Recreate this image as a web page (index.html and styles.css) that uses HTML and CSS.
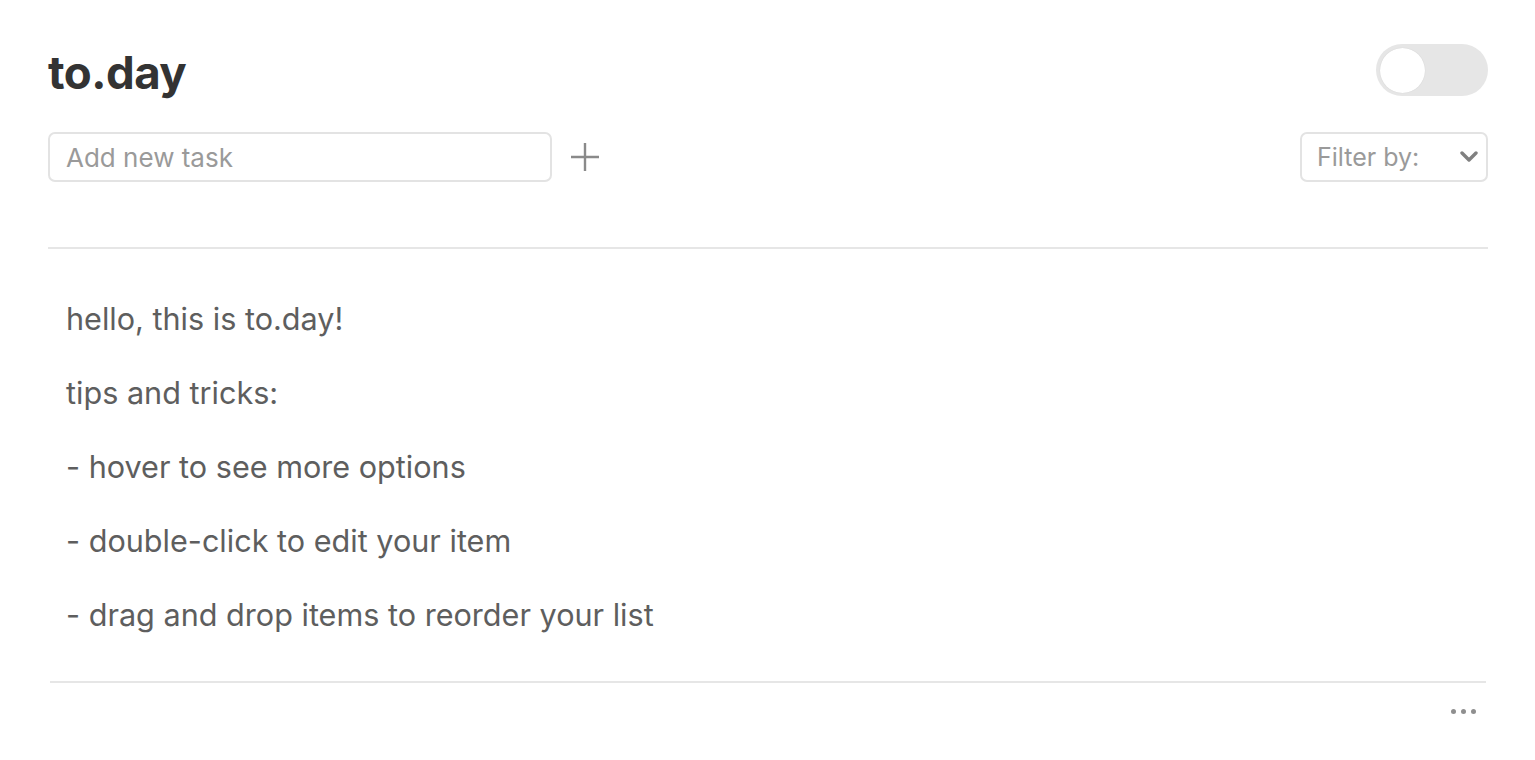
FILE: index.html
```html
<!DOCTYPE html>
<html lang="en">
<head>
<meta charset="utf-8">
<title>to.day</title>
<link rel="stylesheet" href="styles.css">
</head>
<body>
<div class="app">
  <header class="top">
    <h1 class="title">to.day</h1>
    <div class="toggle"><span class="knob"></span></div>
  </header>
  <div class="controls">
    <div class="add">
      <div class="task-input"><span class="placeholder">Add new task</span></div>
      <button class="plus" aria-label="Add">
        <svg width="30" height="30" viewBox="0 0 30 30"><path d="M15 1v28M1 15h28" stroke="#8a8a8a" stroke-width="2.4" fill="none"/></svg>
      </button>
    </div>
    <div class="filter">
      <span class="filter-label">Filter by:</span>
      <svg class="chev" width="18" height="12" viewBox="0 0 18 12"><path d="M2 2l7 7 7-7" stroke="#808080" stroke-width="3.4" fill="none" stroke-linecap="round" stroke-linejoin="round"/></svg>
    </div>
  </div>
  <div class="rule"></div>
  <ul class="list">
    <li>hello, this is to.day!</li>
    <li>tips and tricks:</li>
    <li>- hover to see more options</li>
    <li>- double-click to edit your item</li>
    <li>- drag and drop items to reorder your list</li>
  </ul>
  <div class="rule rule-bottom"></div>
  <footer class="foot">
    <span class="dots"><i></i><i></i><i></i></span>
  </footer>
</div>
</body>
</html>
```
FILE: styles.css
```css
* { box-sizing: border-box; }
html, body { margin: 0; background: #fff; }
body { font-family: Inter, "Liberation Sans", Arial, sans-serif; color: #5a5a5a; }
.app { padding: 44px 47px 0 48px; }
.top { display: flex; justify-content: space-between; align-items: center; height: 52px; }
.title { margin: 0; padding-top: 5px; font-size: 45.6px; font-weight: 700; color: #333; letter-spacing: -0.5px; line-height: 52px; }
.toggle { width: 112px; height: 52px; border-radius: 26px; background: #e6e6e6; padding: 3px 4px; display: flex; align-items: center; }
.knob { width: 45px; height: 45px; border-radius: 50%; background: #fff; box-shadow: 0 0 1px rgba(0,0,0,0.15); }
.controls { display: flex; justify-content: space-between; align-items: center; margin-top: 36px; height: 50px; }
.add { display: flex; align-items: center; gap: 18px; }
.task-input { width: 504px; height: 50px; border: 2px solid #e3e3e3; border-radius: 7px; padding: 0 16px; display: flex; align-items: center; }
.placeholder { font-size: 26px; color: #9a9a9a; }
.plus { border: 0; background: none; padding: 0; display: flex; }
.filter { width: 188px; height: 50px; border: 2px solid #e3e3e3; border-radius: 7px; padding: 0 8px 0 15px; display: flex; align-items: center; justify-content: space-between; }
.filter-label { font-size: 25px; color: #9a9a9a; }
.rule { height: 2px; background: #e6e6e6; margin-top: 65px; }
.list { list-style: none; margin: 0; padding: 33px 18px 0; }
.list li { font-size: 30.6px; line-height: 74px; color: #5e5e5e; }
.rule-bottom { margin: 29px 2px 0; }
.foot { display: flex; justify-content: flex-end; padding: 26px 12px 0 0; }
.dots { display: flex; gap: 5px; }
.dots i { width: 5px; height: 5px; border-radius: 50%; background: #8f8f8f; }
```
